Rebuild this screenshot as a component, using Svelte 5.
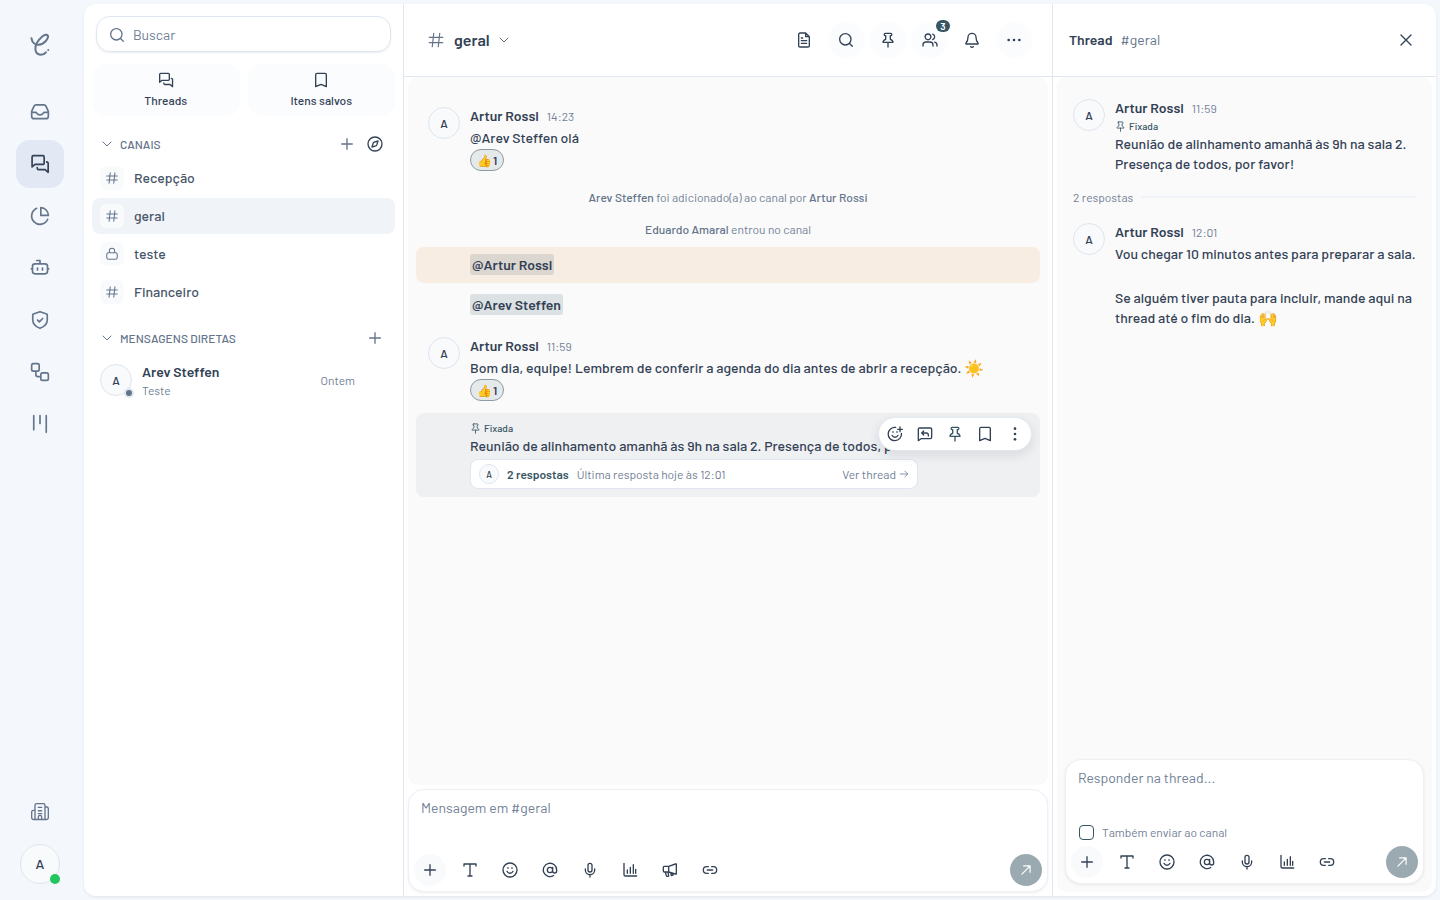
<script>
    const ICONS = {
        inbox: 'M2 12.5h4.8c.8 0 1.1.4 1.5 1.1.7 1.3 1.5 1.9 3.7 1.9s3-.6 3.7-1.9c.4-.7.7-1.1 1.5-1.1H22M7.4 3.5h9.2a3 3 0 0 1 2.7 1.7l2.3 5.2c.3.6.4 1 .4 1.7V17a3 3 0 0 1-3 3H5a3 3 0 0 1-3-3v-4.9c0-.7.1-1.1.4-1.7l2.3-5.2a3 3 0 0 1 2.7-1.7z',
        chats: 'M4 2h11.500a1.500 1.500 0 0 1 1.500 1.500V11a1.500 1.500 0 0 1-1.500 1.500H6L2.500 15.500V3.500A1.500 1.500 0 0 1 4 2zM20 9.500a1.800 1.800 0 0 1 1.800 1.800V22L18.200 18.800H10.500A1.800 1.800 0 0 1 8.700 17v-.6',
        pie: 'M21.200 15.900A10 10 0 1 1 8 2.800M13 2a9.300 9.300 0 0 1 9 9.300h-9z',
        bot: 'M6 7h12a3 3 0 0 1 3 3v6a3 3 0 0 1-3 3H6a3 3 0 0 1-3-3v-6a3 3 0 0 1 3-3zM12 7V3H8M1.500 13H3M21 13h1.500M9 12v2.500M15 12v2.500',
        shield: 'M12 2l8 2.800a1 1 0 0 1 .7 1V12c0 5.500-4 8.300-8.700 10-4.700-1.700-8.700-4.500-8.700-10V5.800a1 1 0 0 1 .7-1zM9 12l2.200 2.200 4-4',
        flow: 'M4 2h5a2 2 0 0 1 2 2v5a2 2 0 0 1-2 2H4a2 2 0 0 1-2-2V4a2 2 0 0 1 2-2zM15 13h5a2 2 0 0 1 2 2v5a2 2 0 0 1-2 2h-5a2 2 0 0 1-2-2v-5a2 2 0 0 1 2-2zM7 11v4a2.500 2.500 0 0 0 2.500 2.500H13',
        board: 'M4.500 2v17M12 2v9.500M19.500 2v20',
        building: 'M6 21V4a2 2 0 0 1 2-2h8a2 2 0 0 1 2 2v17M6 10H4a2 2 0 0 0-2 2v7a2 2 0 0 0 2 2h16a2 2 0 0 0 2-2V8a2 2 0 0 0-2-2h-2M10 6.500h4M10 10.500h4M10 14h4M10 21v-3a2 2 0 0 1 4 0v3',
        search: 'M11 2.500a8.500 8.500 0 1 1 0 17 8.500 8.500 0 0 1 0-17zM21.500 21.500L17.200 17.200',
        bookmark: 'M6 2h12a2 2 0 0 1 2 2v18l-8-3.500L4 22V4a2 2 0 0 1 2-2z',
        chevron: 'M4 8l8 8 8-8',
        plus: 'M12 4v16M4 12h16',
        compass: 'M12 1.500a10.500 10.500 0 1 1 0 21 10.500 10.500 0 0 1 0-21zM16.500 7.500l-1.700 5.500a3 3 0 0 1-1.800 1.800l-5.500 1.700L9.200 11A3 3 0 0 1 11 9.200z',
        hash: 'M9 3L7 21M17 3l-2 18M3 8.500h18M3 15.500h18',
        lock: 'M6 10h12a3 3 0 0 1 3 3v5a3 3 0 0 1-3 3H6a3 3 0 0 1-3-3v-5a3 3 0 0 1 3-3zM7.500 10V6.500a4.500 4.500 0 0 1 9 0V10',
        file: 'M14.500 1.500H6a2 2 0 0 0-2 2v17a2 2 0 0 0 2 2h12a2 2 0 0 0 2-2V7zM14.500 1.500V7H20M8 9h2M8 13h8M8 17h8',
        pin: 'M8 2h8a1.500 1.500 0 0 1 0 3.500h-.5v5.500c2.500.8 4 2.200 4 4.500H4.500c0-2.300 1.500-3.700 4-4.500V5.500H8A1.500 1.500 0 0 1 8 2zM12 15.500V22.500',
        users: 'M9 3a4.300 4.300 0 1 1 0 8.600A4.300 4.300 0 0 1 9 3zM1.500 21v-1.500a4.500 4.500 0 0 1 4.500-4.500h6a4.500 4.500 0 0 1 4.500 4.500V21M16 3.200a4.300 4.300 0 0 1 0 8.200M19 15.300a4.500 4.500 0 0 1 3.500 4.400V21',
        bell: 'M6 8a6 6 0 0 1 12 0c0 5.300 1.500 7 3.200 9a.6.6 0 0 1-.5 1H3.300a.6.6 0 0 1-.5-1C4.500 15 6 13.300 6 8zM10 22a2.800 2.800 0 0 0 4 0',
        close: 'M4.500 4.500l15 15M19.500 4.500l-15 15',
        type: 'M3 6V3h18v3M12 3v18M9 21h6',
        smile: 'M12 1.500a10.500 10.500 0 1 1 0 21 10.500 10.500 0 0 1 0-21zM7.500 14a5 5 0 0 0 9 0M9 8.500v1M15 8.500v1',
        smilePlus: 'M21.700 11A10 10 0 1 1 13 2.100M7.500 14a5 5 0 0 0 9 0M9 8.500v1M15 8.500v1M16 5h7M19.500 1.500v7',
        at: 'M16 8v5.500a3 3 0 0 0 6 0V12a10 10 0 1 0-4.500 8.300M12 8a4 4 0 1 1 0 8 4 4 0 0 1 0-8z',
        mic: 'M12 2a3 3 0 0 1 3 3v7a3 3 0 0 1-6 0V5a3 3 0 0 1 3-3zM5 10.500V12a7 7 0 0 0 14 0v-1.500M12 19v3.500',
        chart: 'M3 2v17a2 2 0 0 0 2 2h17M8 12v5M12.500 8v9M17 4v13M20.500 11v6',
        megaphone: 'M3.500 6.500H10L20 3h1.500v15H20l-10-3H3.500A1.500 1.500 0 0 1 2 13.500V8a1.500 1.500 0 0 1 1.500-1.500M10 6.500V15M5 15l1.500 5.500a1.500 1.500 0 0 0 2 1L10 21l-1-6M13 16l1 4.500 2.500-.8-.8-2.700',
        link: 'M9.500 17H7A5 5 0 0 1 7 7h2.500M14.500 7H17a5 5 0 0 1 0 10h-2.500M8 12h8',
        reply: 'M4 3h16a2 2 0 0 1 2 2v12a2 2 0 0 1-2 2H6l-4 3V5a2 2 0 0 1 2-2zM10 7.500L7 10.500l3 3M7 10.500h7a3 3 0 0 1 3 3V15',
        arrowRight: 'M3 12h18M14 5l7 7-7 7',
        arrowUpRight: 'M5 19L19 5M8 5h11v11'
    };

    const nav = [
        { icon: 'inbox', label: 'Caixa de entrada' },
        { icon: 'chats', label: 'Chat interno', active: true },
        { icon: 'pie', label: 'Relatórios' },
        { icon: 'bot', label: 'Robôs' },
        { icon: 'shield', label: 'Segurança' },
        { icon: 'flow', label: 'Fluxos' },
        { icon: 'board', label: 'Quadros' }
    ];

    const channels = [
        { name: 'Recepção', icon: 'hash' },
        { name: 'geral', icon: 'hash' },
        { name: 'teste', icon: 'lock' },
        { name: 'Financeiro', icon: 'hash' }
    ];

    const tools = [
        { icon: 'type', label: 'Formatação' },
        { icon: 'smile', label: 'Emoji' },
        { icon: 'at', label: 'Mencionar' },
        { icon: 'mic', label: 'Gravar áudio' },
        { icon: 'chart', label: 'Enquete' },
        { icon: 'megaphone', label: 'Anúncio' },
        { icon: 'link', label: 'Link' }
    ];
    const threadTools = tools.filter((t) => t.icon !== 'megaphone');

    let current = $state('geral');
    let draft = $state('');
    let reply = $state('');
    let alsoSend = $state(false);
</script>

{#snippet icon(name, size = 16, weight = 2)}
    <svg width={size} height={size} viewBox="0 0 24 24" fill="none" stroke="currentColor" stroke-width={weight} stroke-linecap="round" stroke-linejoin="round" aria-hidden="true">
        <path d={ICONS[name]} />
    </svg>
{/snippet}

{#snippet dots(vertical)}
    <svg width="16" height="16" viewBox="0 0 24 24" fill="currentColor" aria-hidden="true">
        {#each [4, 12, 20] as p}
            <circle cx={vertical ? 12 : p} cy={vertical ? p : 12} r="2" />
        {/each}
    </svg>
{/snippet}

{#snippet author(time)}
    <div class="author"><strong>Artur Rossi</strong><time>{time}</time></div>
{/snippet}

{#snippet pinned()}
    <div class="pinned">{@render icon('pin', 11, 1.8)}<span>Fixada</span></div>
{/snippet}

{#snippet toolbar(items)}
    <div class="tools">
        <button class="tool filled" aria-label="Adicionar">{@render icon('plus')}</button>
        {#each items as t}
            <button class="tool" aria-label={t.label}>{@render icon(t.icon)}</button>
        {/each}
        <button class="send" aria-label="Enviar">{@render icon('arrowUpRight', 14)}</button>
    </div>
{/snippet}

<div class="shell">
    <nav class="rail">
        <a class="logo" href="#inicio" aria-label="Início">
            <svg width="20" height="23" viewBox="0 0 60 70" fill="none" stroke="currentColor" stroke-width="6" stroke-linecap="round" aria-hidden="true">
                <path d="M4 16C6 28 14 37 26 36C42 35 57 17 54 8C52 2 43 6 37 11C24 22 15 37 16 50C17 61 24 66 32 66C39 66 45 63 48 59M55 52v.1" />
            </svg>
        </a>
        <div class="rail-list">
            {#each nav as item}
                <a class="rail-item" class:active={item.active} href="#{item.icon}" aria-label={item.label}>
                    {@render icon(item.icon, 20)}
                </a>
            {/each}
        </div>
        <a class="rail-item" href="#empresa" aria-label="Empresa">{@render icon('building', 20, 1.6)}</a>
        <button class="me" aria-label="Minha conta">A<span class="online"></span></button>
    </nav>

    <main class="card">
        <aside class="side">
            <label class="search">
                {@render icon('search')}
                <input type="search" placeholder="Buscar" aria-label="Buscar" />
            </label>

            <div class="shortcuts">
                <button>{@render icon('chats')}Threads</button>
                <button>{@render icon('bookmark')}Itens salvos</button>
            </div>

            <div class="section">
                <button class="toggle">{@render icon('chevron', 12)}CANAIS</button>
                <button class="mini" aria-label="Novo canal">{@render icon('plus')}</button>
                <button class="mini dark" aria-label="Explorar canais">{@render icon('compass')}</button>
            </div>
            <div class="channels">
                {#each channels as c}
                    <button class="channel" class:active={c.name === current} onclick={() => (current = c.name)}>
                        <span class="channel-icon">{@render icon(c.icon, 14, 1.8)}</span>
                        <span>{c.name}</span>
                    </button>
                {/each}
            </div>

            <div class="section">
                <button class="toggle">{@render icon('chevron', 12)}MENSAGENS DIRETAS</button>
                <button class="mini" aria-label="Nova mensagem">{@render icon('plus')}</button>
            </div>
            <button class="dm">
                <span class="avatar">A<span class="offline"></span></span>
                <span class="dm-text"><strong>Arev Steffen</strong><small>Teste</small></span>
                <time>Ontem</time>
            </button>
        </aside>

        <section class="chat">
            <header>
                <button class="title"><span class="title-hash">{@render icon('hash', 18, 1.6)}</span>geral{@render icon('chevron', 12, 1.6)}</button>
                <div class="actions">
                    <button aria-label="Arquivos">{@render icon('file')}</button>
                    <button class="filled" aria-label="Pesquisar">{@render icon('search')}</button>
                    <button class="filled" aria-label="Fixadas">{@render icon('pin')}</button>
                    <button class="filled" aria-label="Membros">{@render icon('users')}<span class="badge">3</span></button>
                    <button aria-label="Notificações">{@render icon('bell')}</button>
                    <button class="filled" aria-label="Mais opções">{@render dots(false)}</button>
                </div>
            </header>

            <div class="feed">
                <article class="row">
                    <span class="avatar">A</span>
                    <div class="body">
                        {@render author('14:23')}
                        <p>@Arev Steffen olá</p>
                        <button class="reaction"><span>👍</span>1</button>
                    </div>
                </article>
                <p class="event"><b>Arev Steffen</b> foi adicionado(a) ao canal por <b>Artur Rossi</b></p>
                <p class="event"><b>Eduardo Amaral</b> entrou no canal</p>
                <article class="row follow highlight">
                    <div class="body"><p><mark>@Artur Rossi</mark></p></div>
                </article>
                <article class="row follow">
                    <div class="body"><p><mark>@Arev Steffen</mark></p></div>
                </article>
                <article class="row">
                    <span class="avatar">A</span>
                    <div class="body">
                        {@render author('11:59')}
                        <p>Bom dia, equipe! Lembrem de conferir a agenda do dia antes de abrir a recepção. <span class="emoji">☀️</span></p>
                        <button class="reaction"><span>👍</span>1</button>
                    </div>
                </article>
                <article class="row follow hovered">
                    <div class="body">
                        {@render pinned()}
                        <p>Reunião de alinhamento amanhã às 9h na sala 2. Presença de todos, por favor!</p>
                        <button class="summary">
                            <span class="avatar tiny">A</span>
                            <strong>2 respostas</strong>
                            <span>Última resposta hoje às 12:01</span>
                            <span class="view">Ver thread {@render icon('arrowRight', 10)}</span>
                        </button>
                    </div>
                    <div class="hover-bar">
                        <button aria-label="Reagir">{@render icon('smilePlus')}</button>
                        <button aria-label="Responder">{@render icon('reply')}</button>
                        <button class="teal" aria-label="Desafixar">{@render icon('pin')}</button>
                        <button aria-label="Salvar">{@render icon('bookmark')}</button>
                        <button aria-label="Mais">{@render dots(true)}</button>
                    </div>
                </article>
            </div>

            <div class="composer">
                <textarea placeholder="Mensagem em #geral" aria-label="Mensagem em #geral" bind:value={draft}></textarea>
                {@render toolbar(tools)}
            </div>
        </section>

        <aside class="thread">
            <header>
                <h2>Thread</h2>
                <span>#geral</span>
                <button aria-label="Fechar">{@render icon('close')}</button>
            </header>
            <div class="thread-panel">
                <div class="replies">
                    <article class="row">
                        <span class="avatar">A</span>
                        <div class="body">
                            {@render author('11:59')}
                            {@render pinned()}
                            <p>Reunião de alinhamento amanhã às 9h na sala 2. Presença de todos, por favor!</p>
                        </div>
                    </article>
                    <div class="count"><span>2 respostas</span></div>
                    <article class="row">
                        <span class="avatar">A</span>
                        <div class="body">
                            {@render author('12:01')}
                            <p>Vou chegar 10 minutos antes para preparar a sala.</p>
                            <p class="para">Se alguém tiver pauta para incluir, mande aqui na thread até o fim do dia. <span class="emoji">🙌</span></p>
                        </div>
                    </article>
                </div>
                <div class="composer">
                    <textarea placeholder="Responder na thread..." aria-label="Responder na thread" bind:value={reply}></textarea>
                    <label class="also">
                        <input type="checkbox" bind:checked={alsoSend} />
                        Também enviar ao canal
                    </label>
                    {@render toolbar(threadTools)}
                </div>
            </div>
        </aside>
    </main>
</div>

<style>
    :global(body) {
        background: #f4f7fc;
        color: #334155;
        font-family: Barlow, Roboto, "Liberation Sans", sans-serif;
        font-size: 14px;
        line-height: 20px;
    }

    * {
        box-sizing: border-box;
    }

    button,
    input,
    textarea {
        font: inherit;
        color: inherit;
        border: 0;
        padding: 0;
        margin: 0;
        background: none;
    }

    button {
        cursor: pointer;
    }

    p,
    h2 {
        margin: 0;
    }

    svg {
        display: block;
        flex: none;
    }

    strong {
        font-weight: 600;
    }

    b {
        font-weight: 500;
    }

    .shell {
        display: flex;
        height: 100vh;
        padding: 4px 4px 4px 0;
    }

    .rail {
        width: 84px;
        padding: 16px 22px 12px 18px;
        display: flex;
        flex-direction: column;
        align-items: center;
        color: #64748b;
    }

    .logo {
        height: 48px;
        margin-bottom: 20px;
        display: flex;
        align-items: center;
        color: #64748b;
    }

    .rail-list {
        flex: 1;
        display: flex;
        flex-direction: column;
        gap: 4px;
    }

    .rail-item {
        width: 48px;
        height: 48px;
        display: grid;
        place-items: center;
        border-radius: 14px;
        color: #64748b;
    }

    .rail-item.active {
        background: #e2e8f4;
        color: #334155;
    }

    .me {
        position: relative;
        width: 40px;
        height: 40px;
        margin-top: 8px;
        border: 1px solid #dfe6f0;
        border-radius: 50%;
        background: #f8fafc;
        color: #334155;
        font-weight: 500;
    }

    .online {
        position: absolute;
        right: -1px;
        bottom: -1px;
        width: 10px;
        height: 10px;
        border-radius: 50%;
        background: #22c55e;
    }

    .card {
        flex: 1;
        min-width: 0;
        display: flex;
        background: #fff;
        border-radius: 12px;
        box-shadow: 0 1px 3px rgba(15, 23, 42, 0.08);
    }

    .side {
        width: 320px;
        padding: 12px 8px;
        border-right: 1px solid #dfe6f0;
    }

    .search {
        height: 36px;
        margin: 0 4px 12px;
        padding: 1px 12px 0;
        display: flex;
        align-items: center;
        gap: 8px;
        border: 1px solid #dfe6f0;
        border-radius: 14px;
        box-shadow: 0 1px 2px rgba(15, 23, 42, 0.08);
        color: #64748b;
    }

    .search input {
        flex: 1;
        min-width: 0;
        outline: none;
    }

    ::placeholder {
        color: #718096;
        opacity: 1;
    }

    .shortcuts {
        display: grid;
        grid-template-columns: 1fr 1fr;
        gap: 8px;
        margin-bottom: 12px;
    }

    .shortcuts button {
        height: 52px;
        display: flex;
        flex-direction: column;
        align-items: center;
        justify-content: center;
        gap: 3px;
        border-radius: 14px;
        background: #fbfcfe;
        font-size: 12px;
        line-height: 18px;
        font-weight: 500;
    }

    .section {
        height: 32px;
        padding: 0 8px;
        display: flex;
        align-items: center;
        gap: 4px;
        color: #64748b;
    }

    .toggle {
        margin-right: auto;
        padding-left: 1px;
        display: flex;
        align-items: center;
        gap: 7px;
        font-size: 12px;
        font-weight: 500;
    }

    .mini {
        width: 24px;
        height: 24px;
        display: grid;
        place-items: center;
    }

    .mini.dark {
        color: #334155;
    }

    .channels {
        display: grid;
        gap: 2px;
        margin-bottom: 12px;
    }

    .channel {
        height: 36px;
        padding: 0 8px;
        display: flex;
        align-items: center;
        gap: 10px;
        border-radius: 8px;
        color: #475569;
        font-weight: 500;
        line-height: 22px;
        text-align: left;
    }

    .channel.active {
        background: #f0f3f8;
    }

    .channel-icon {
        width: 24px;
        height: 24px;
        display: grid;
        place-items: center;
        border-radius: 6px;
        background: #f8fafc;
        color: #64748b;
    }

    .dm {
        width: 100%;
        height: 52px;
        padding: 0 40px 0 8px;
        display: flex;
        align-items: center;
        gap: 10px;
        text-align: left;
    }

    .dm-text {
        flex: 1;
        display: grid;
    }

    .dm-text small,
    time {
        color: #718096;
        font-size: 12px;
        line-height: 16px;
    }

    .avatar {
        position: relative;
        flex: none;
        width: 32px;
        height: 32px;
        display: grid;
        place-items: center;
        border: 1px solid #dfe6f0;
        border-radius: 50%;
        background: #f8fafc;
        font-size: 12px;
        font-weight: 500;
    }

    .offline {
        position: absolute;
        right: -3px;
        bottom: -3px;
        width: 10px;
        height: 10px;
        border: 2px solid #e2e8f0;
        border-radius: 50%;
        background: #64748b;
    }

    .chat {
        flex: 1;
        min-width: 0;
        display: flex;
        flex-direction: column;
    }

    header {
        height: 73px;
        display: flex;
        align-items: center;
        border-bottom: 1px solid #dfe6f0;
    }

    .chat header {
        padding: 0 20px 0 23px;
    }

    .title {
        margin-right: auto;
        display: flex;
        align-items: center;
        gap: 8px;
        font-size: 16px;
        font-weight: 600;
        color: #334155;
    }

    .title-hash {
        margin-right: 1px;
        color: #64748b;
    }

    .actions {
        display: flex;
        gap: 6px;
    }

    .actions button {
        position: relative;
        width: 36px;
        height: 36px;
        display: grid;
        place-items: center;
        border-radius: 50%;
    }

    .actions .filled {
        background: #fbfcfe;
    }

    .badge {
        position: absolute;
        top: -2px;
        right: -2px;
        width: 14px;
        height: 12px;
        border-radius: 6px;
        background: #375563;
        color: #fff;
        font-size: 10px;
        line-height: 12px;
        font-weight: 600;
    }

    .feed {
        flex: 1;
        margin: 0 4px 4px;
        padding: 20px 8px 8px;
        display: flex;
        flex-direction: column;
        gap: 4px;
        border-radius: 10px;
        background: #fafafa;
    }

    .row {
        position: relative;
        padding: 8px 12px;
        display: flex;
        gap: 10px;
        border-radius: 8px;
    }

    .row .avatar {
        margin-top: 2px;
    }

    .follow {
        padding-left: 54px;
    }

    .body {
        flex: 1;
        min-width: 0;
        font-weight: 500;
    }

    .author {
        display: flex;
        align-items: center;
        gap: 8px;
        height: 22px;
        margin-bottom: 1px;
    }

    time,
    .summary {
        font-weight: 400;
    }

    .highlight {
        background: #f8ede3;
    }

    .hovered {
        background: #eff0f2;
    }

    mark {
        padding: 2px;
        border-radius: 3px;
        background: rgba(55, 85, 99, 0.15);
        color: inherit;
        font-weight: 600;
    }

    .reaction {
        width: 34px;
        height: 22px;
        margin-top: 1px;
        display: flex;
        align-items: center;
        justify-content: center;
        gap: 1px;
        border: 1px solid #8b9ca5;
        border-radius: 11px;
        background: #e6e9ea;
        font-size: 12px;
        font-weight: 600;
    }

    .emoji {
        display: inline-block;
        height: 16px;
        font-size: 16px;
        line-height: 16px;
        vertical-align: text-bottom;
    }

    .event {
        color: #718096;
        font-size: 12px;
        line-height: 28px;
        text-align: center;
    }

    .event b {
        color: #64748b;
    }

    .pinned {
        height: 14px;
        margin-bottom: 1px;
        display: flex;
        align-items: center;
        gap: 3px;
        color: #375563;
        font-size: 10px;
        line-height: 14px;
    }

    .summary {
        width: 100%;
        max-width: 448px;
        height: 30px;
        margin-top: 3px;
        padding: 0 8px;
        display: flex;
        align-items: center;
        gap: 8px;
        border: 1px solid #dfe6f0;
        border-radius: 8px;
        background: #fff;
        color: #718096;
        font-size: 12px;
    }

    .summary strong {
        color: #375563;
    }

    .summary .tiny {
        width: 20px;
        height: 20px;
        margin: 0;
        color: #334155;
        font-size: 9px;
    }

    .view {
        margin-left: auto;
        display: flex;
        align-items: center;
        gap: 3px;
    }

    .hover-bar {
        position: absolute;
        top: 4px;
        right: 8px;
        height: 34px;
        padding: 0 1px;
        display: flex;
        border: 1px solid #e2e8f0;
        border-radius: 17px;
        background: #fff;
        box-shadow: 0 4px 12px rgba(15, 23, 42, 0.1);
    }

    .hover-bar button {
        width: 30px;
        display: grid;
        place-items: center;
    }

    .hover-bar .teal {
        color: #375563;
    }

    .composer {
        margin: 0 4px 4px;
        padding: 8px 5px 5px;
        border: 1px solid #edf0f5;
        border-radius: 16px;
        background: #fff;
        box-shadow: 0 1px 3px rgba(15, 23, 42, 0.08);
    }

    textarea {
        display: block;
        width: 100%;
        height: 56px;
        padding: 0 7px;
        outline: none;
        resize: none;
    }

    .tools {
        display: flex;
        gap: 8px;
    }

    .tool,
    .send {
        width: 32px;
        height: 32px;
        display: grid;
        place-items: center;
        border-radius: 50%;
    }

    .filled {
        background: #f8fafc;
    }

    .send {
        margin-left: auto;
        background: #9baab1;
        color: #fff;
    }

    .thread {
        width: 384px;
        display: flex;
        flex-direction: column;
        border-left: 1px solid #dfe6f0;
    }

    .thread header {
        padding: 0 18px 0 16px;
        gap: 8px;
    }

    .thread h2 {
        font-size: 14px;
        font-weight: 600;
    }

    .thread header span {
        color: #64748b;
    }

    .thread header button {
        width: 24px;
        height: 24px;
        margin-left: auto;
        display: grid;
        place-items: center;
    }

    .thread-panel {
        flex: 1;
        margin: 0 4px 4px;
        padding: 12px 4px 4px;
        display: flex;
        flex-direction: column;
        border-radius: 10px;
        background: #fafafa;
    }

    .replies {
        flex: 1;
    }

    .replies .row {
        padding-right: 6px;
    }

    .replies .pinned {
        margin: -1px 0 1px;
    }

    .count {
        display: flex;
        align-items: center;
        gap: 8px;
        padding: 6px 12px 7px;
        color: #718096;
        font-size: 12px;
        line-height: 18px;
    }

    .count::after {
        content: "";
        flex: 1;
        height: 2px;
        background: #eff3f9;
    }

    .para {
        margin-top: 24px;
    }

    .also {
        display: flex;
        align-items: center;
        gap: 8px;
        height: 16px;
        margin-bottom: 6px;
        padding: 0 8px;
        color: #718096;
        font-size: 12px;
    }

    .also input {
        appearance: none;
        width: 15px;
        height: 15px;
        border: 1px solid #375563;
        border-radius: 4px;
        background: #fff;
    }

    .also input:checked {
        background: #375563;
    }
</style>
